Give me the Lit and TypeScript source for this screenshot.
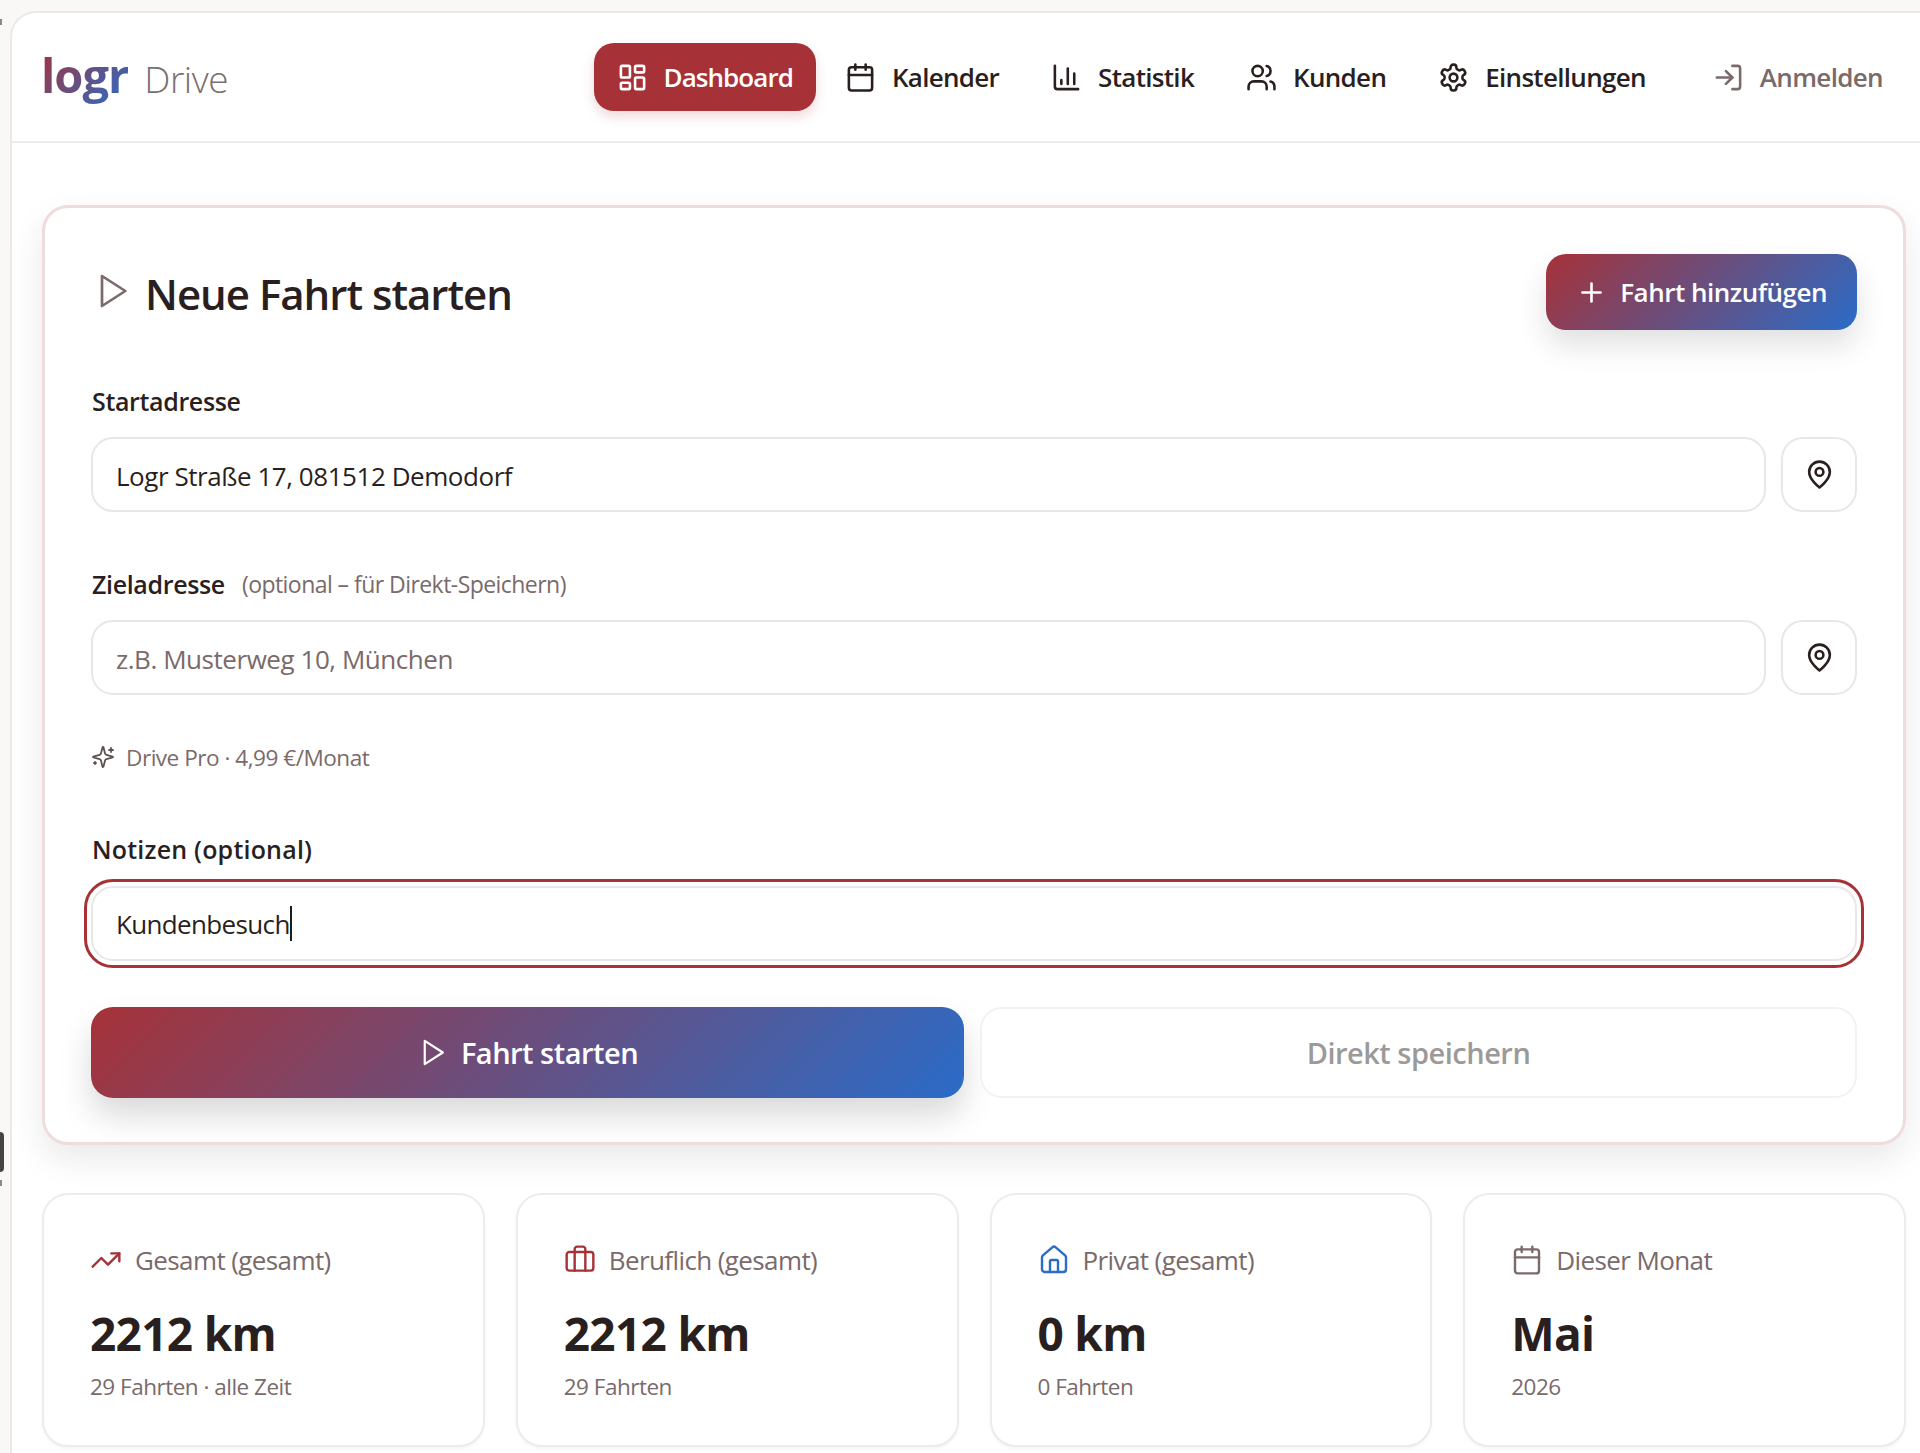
import { LitElement, css, html, svg, type TemplateResult } from "lit";
import { customElement } from "lit/decorators.js";

const ICONS: Record<string, TemplateResult> = {
  dashboard: svg`<rect x="3" y="3" width="7" height="9" rx="1"/><rect x="14" y="3" width="7" height="5" rx="1"/><rect x="14" y="12" width="7" height="9" rx="1"/><rect x="3" y="16" width="7" height="5" rx="1"/>`,
  calendar: svg`<path d="M8 2v4"/><path d="M16 2v4"/><rect x="3" y="4" width="18" height="18" rx="2"/><path d="M3 10h18"/>`,
  chart: svg`<path d="M3 3v16a2 2 0 0 0 2 2h16"/><path d="M18 17V9"/><path d="M13 17V5"/><path d="M8 17v-3"/>`,
  users: svg`<path d="M16 21v-2a4 4 0 0 0-4-4H6a4 4 0 0 0-4 4v2"/><circle cx="9" cy="7" r="4"/><path d="M22 21v-2a4 4 0 0 0-3-3.87"/><path d="M16 3.13a4 4 0 0 1 0 7.75"/>`,
  settings: svg`<path d="M12.22 2h-.44a2 2 0 0 0-2 2v.18a2 2 0 0 1-1 1.73l-.43.25a2 2 0 0 1-2 0l-.15-.08a2 2 0 0 0-2.73.73l-.22.38a2 2 0 0 0 .73 2.73l.15.1a2 2 0 0 1 1 1.72v.51a2 2 0 0 1-1 1.74l-.15.09a2 2 0 0 0-.73 2.73l.22.38a2 2 0 0 0 2.73.73l.15-.08a2 2 0 0 1 2 0l.43.25a2 2 0 0 1 1 1.73V20a2 2 0 0 0 2 2h.44a2 2 0 0 0 2-2v-.18a2 2 0 0 1 1-1.73l.43-.25a2 2 0 0 1 2 0l.15.08a2 2 0 0 0 2.73-.73l.22-.39a2 2 0 0 0-.73-2.73l-.15-.08a2 2 0 0 1-1-1.74v-.5a2 2 0 0 1 1-1.74l.15-.09a2 2 0 0 0 .73-2.73l-.22-.38a2 2 0 0 0-2.73-.73l-.15.08a2 2 0 0 1-2 0l-.43-.25a2 2 0 0 1-1-1.73V4a2 2 0 0 0-2-2z"/><circle cx="12" cy="12" r="3"/>`,
  login: svg`<path d="M15 3h4a2 2 0 0 1 2 2v14a2 2 0 0 1-2 2h-4"/><path d="m10 17 5-5-5-5"/><path d="M15 12H3"/>`,
  play: svg`<polygon points="6 3 20 12 6 21 6 3"/>`,
  plus: svg`<path d="M5 12h14"/><path d="M12 5v14"/>`,
  pin: svg`<path d="M20 10c0 6-8 12-8 12s-8-6-8-12a8 8 0 0 1 16 0Z"/><circle cx="12" cy="10" r="3"/>`,
  sparkles: svg`<path d="M9.937 15.5A2 2 0 0 0 8.5 14.063l-6.135-1.582a.5.5 0 0 1 0-.962L8.5 9.936A2 2 0 0 0 9.937 8.5l1.582-6.135a.5.5 0 0 1 .963 0L14.063 8.5A2 2 0 0 0 15.5 9.937l6.135 1.581a.5.5 0 0 1 0 .964L15.5 14.063a2 2 0 0 0-1.437 1.437l-1.582 6.135a.5.5 0 0 1-.963 0z"/><path d="M20 3v4"/><path d="M22 5h-4"/><path d="M4 17v2"/><path d="M5 18H3"/>`,
  trend: svg`<path d="m22 7-8.5 8.5-5-5L2 17"/><path d="M16 7h6v6"/>`,
  briefcase: svg`<path d="M16 20V4a2 2 0 0 0-2-2h-4a2 2 0 0 0-2 2v16"/><rect x="2" y="6" width="20" height="14" rx="2"/>`,
  home: svg`<path d="M15 21v-8a1 1 0 0 0-1-1h-4a1 1 0 0 0-1 1v8"/><path d="M3 10a2 2 0 0 1 .709-1.528l7-5.999a2 2 0 0 1 2.582 0l7 5.999A2 2 0 0 1 21 10v9a2 2 0 0 1-2 2H5a2 2 0 0 1-2-2z"/>`,
};

const icon = (name: string, cls = "") =>
  html`<svg class="icon ${cls}" viewBox="0 0 24 24" aria-hidden="true">${ICONS[name]}</svg>`;

const NAV = [
  { label: "Kalender", icon: "calendar" },
  { label: "Statistik", icon: "chart" },
  { label: "Kunden", icon: "users" },
  { label: "Einstellungen", icon: "settings" },
];

const STATS = [
  { label: "Gesamt (gesamt)", icon: "trend", tone: "red", value: "2212 km", sub: "29 Fahrten · alle Zeit" },
  { label: "Beruflich (gesamt)", icon: "briefcase", tone: "red", value: "2212 km", sub: "29 Fahrten" },
  { label: "Privat (gesamt)", icon: "home", tone: "blue", value: "0 km", sub: "0 Fahrten" },
  { label: "Dieser Monat", icon: "calendar", tone: "grey", value: "Mai", sub: "2026" },
];

@customElement("app-root")
export class AppRoot extends LitElement {
  static styles = css`
    :host {
      display: block;
      position: relative;
      height: 1453px;
      overflow: hidden;
      background: #faf8f6;
      color: #2a1f1f;
      font-family: "Open Sans", "Noto Sans", sans-serif;
    }

    * {
      box-sizing: border-box;
    }

    .icon {
      flex: none;
      width: 31px;
      height: 31px;
      fill: none;
      stroke: currentColor;
      stroke-width: 2;
      stroke-linecap: round;
      stroke-linejoin: round;
    }

    /* bits of the window behind, cut off by the left edge */
    .edge-tab {
      position: absolute;
      left: -4px;
      top: 1132px;
      width: 8px;
      height: 40px;
      border-radius: 4px;
      background: #444;
    }

    .edge-tick {
      position: absolute;
      left: 0;
      width: 2px;
      height: 6px;
      background: #8c8885;
    }

    .edge-tick.top {
      top: 19px;
    }

    .edge-tick.bottom {
      top: 1180px;
    }

    .window {
      margin: 11px 0 0 10px;
      height: 1442px;
      background: #fff;
      border-top: 2px solid #ebe9e7;
      border-left: 2px solid #ebe9e7;
      border-top-left-radius: 26px;
    }

    header {
      display: flex;
      align-items: center;
      height: 130px;
      padding: 0 14px 0 29px;
      border-bottom: 2px solid #ececec;
    }

    .logo {
      display: flex;
      align-items: baseline;
      gap: 16px;
      font-size: 47px;
      line-height: 60px;
    }

    .logo b {
      font-weight: 700;
      letter-spacing: -1px;
      background: linear-gradient(135deg, #a63238, #2a6cc8);
      -webkit-background-clip: text;
      background-clip: text;
      color: transparent;
    }

    .logo span {
      font-size: 37px;
      font-weight: 300;
      letter-spacing: -0.5px;
      color: #7a6f6f;
    }

    nav {
      display: flex;
      align-items: center;
      gap: 6px;
      margin-left: auto;
    }

    .nav-item {
      display: flex;
      align-items: center;
      gap: 16px;
      height: 68px;
      padding: 0 23px;
      border-radius: 20px;
      font-size: 26px;
      font-weight: 600;
      letter-spacing: -0.7px;
      white-space: nowrap;
    }

    .nav-item.active {
      background: #a63238;
      color: #fff;
      letter-spacing: -0.95px;
      box-shadow: 0 6px 12px rgb(166 50 56 / 0.18);
    }

    .nav-item.login {
      margin-left: 15px;
      letter-spacing: -0.65px;
      color: #7a6a6a;
    }

    main {
      padding: 62px 14px 0 30px;
    }

    .panel {
      padding: 46px 46px 44px 46px;
      background: #fff;
      border: 3px solid #efdcdc;
      border-radius: 26px;
      box-shadow: 0 14px 34px rgb(0 0 0 / 0.09);
    }

    .panel-head {
      display: flex;
      align-items: center;
      justify-content: space-between;
      height: 76px;
      margin-bottom: 57px;
    }

    h1 {
      display: flex;
      align-items: center;
      gap: 13px;
      margin: 2px 0 0;
      font-size: 42px;
      font-weight: 600;
      letter-spacing: -1px;
    }

    h1 .icon {
      width: 40px;
      height: 40px;
      margin: -4px 0 0 1px;
      stroke-width: 1.6;
      color: #7a6a6a;
    }

    .grad {
      background: linear-gradient(135deg, #a63238, #2a6cc8);
      color: #fff;
    }

    .add {
      display: flex;
      align-items: center;
      gap: 15.5px;
      height: 76px;
      padding: 0 30px 0 32px;
      border: 0;
      border-radius: 20px;
      font: inherit;
      font-size: 26px;
      font-weight: 600;
      letter-spacing: -0.5px;
      box-shadow: 0 16px 30px rgb(0 0 0 / 0.12);
    }

    .add .icon {
      margin: 0 -2px;
    }

    label {
      display: flex;
      align-items: center;
      height: 28px;
      margin-bottom: 22px;
      padding-left: 1px;
      font-size: 25px;
      font-weight: 600;
      letter-spacing: -0.35px;
    }

    label.notes {
      margin-bottom: 23px;
      letter-spacing: 0.2px;
    }

    label small {
      margin-left: 17px;
      font-size: 23px;
      font-weight: 400;
      letter-spacing: -0.55px;
      color: #7a6a6a;
    }

    .row {
      display: flex;
      gap: 15px;
      margin-bottom: 58px;
    }

    .row.dest {
      margin-bottom: 48px;
    }

    input,
    .note {
      display: flex;
      align-items: center;
      width: 100%;
      height: 75px;
      padding: 0 23px;
      background: #fff;
      border: 2px solid #e9e7e6;
      border-radius: 22px;
      color: #2a1f1f;
      font: inherit;
      font-size: 26px;
      letter-spacing: -0.45px;
      outline: none;
    }

    input {
      padding-top: 2px;
    }

    input::placeholder {
      color: #7a6a6a;
      opacity: 1;
    }

    .pin {
      display: flex;
      flex: none;
      align-items: center;
      justify-content: center;
      width: 76px;
      height: 75px;
      background: #fff;
      border: 2px solid #e9e7e6;
      border-radius: 22px;
    }

    .pro {
      display: flex;
      align-items: center;
      gap: 11px;
      height: 28px;
      margin-bottom: 64px;
      font-size: 22.6px;
      letter-spacing: -0.5px;
      color: #7a6a6a;
    }

    .pro .icon {
      width: 24px;
      height: 24px;
      color: #5d5050;
      stroke-width: 1.8;
    }

    .note {
      outline: 3.5px solid #a63238;
      outline-offset: 4px;
      margin-bottom: 46px;
      letter-spacing: -0.65px;
    }

    .caret {
      flex: none;
      width: 2px;
      height: 35px;
      background: #1c1c1c;
    }

    .actions {
      display: flex;
      gap: 16px;
    }

    .actions > * {
      display: flex;
      flex: 1;
      align-items: center;
      justify-content: center;
      gap: 13px;
      height: 91px;
      border-radius: 22px;
      font: inherit;
      font-size: 29px;
      font-weight: 600;
      letter-spacing: -0.5px;
    }

    .start {
      border: 0;
      box-shadow: 0 18px 32px rgb(0 0 0 / 0.15);
    }

    .start .icon {
      stroke-width: 1.7;
    }

    .save {
      background: #fff;
      border: 2px solid #f3f2f2;
      color: #9b9a99;
    }

    .stats {
      display: grid;
      grid-template-columns: repeat(4, 1fr);
      gap: 31px;
      margin-top: 48px;
    }

    .stat {
      padding: 46.5px 30px 44.5px 46px;
      background: #fff;
      border: 2px solid #ececec;
      border-radius: 26px;
      box-shadow: 0 2px 3px rgb(0 0 0 / 0.04);
    }

    .stat-label {
      display: flex;
      align-items: center;
      gap: 13px;
      height: 36px;
      font-size: 26px;
      font-weight: 500;
      letter-spacing: -0.6px;
      color: #7a6a6a;
    }

    .stat-label .icon {
      width: 32px;
      height: 32px;
      stroke-width: 1.8;
    }

    .stat-label .red {
      color: #a63238;
    }

    .stat-label .blue {
      color: #2a6cc8;
    }

    .stat-value {
      margin-top: 25px;
      font-size: 46px;
      font-weight: 700;
      line-height: 60px;
      letter-spacing: -0.7px;
    }

    .stat-sub {
      margin-top: 10px;
      font-size: 22.5px;
      line-height: 28px;
      letter-spacing: -0.5px;
      color: #7a6a6a;
    }
  `;

  render() {
    return html`
      <div class="edge-tab"></div>
      <div class="edge-tick top"></div>
      <div class="edge-tick bottom"></div>
      <div class="window">
        <header>
          <div class="logo"><b>logr</b><span>Drive</span></div>
          <nav>
            <div class="nav-item active">${icon("dashboard")}Dashboard</div>
            ${NAV.map((n) => html`<div class="nav-item">${icon(n.icon)}${n.label}</div>`)}
            <div class="nav-item login">${icon("login")}Anmelden</div>
          </nav>
        </header>
        <main>
          <section class="panel">
            <div class="panel-head">
              <h1>${icon("play")}Neue Fahrt starten</h1>
              <button class="add grad">${icon("plus")}Fahrt hinzufügen</button>
            </div>
            <label>Startadresse</label>
            <div class="row">
              <input value="Logr Straße 17, 081512 Demodorf" />
              <div class="pin">${icon("pin")}</div>
            </div>
            <label>Zieladresse<small>(optional – für Direkt-Speichern)</small></label>
            <div class="row dest">
              <input placeholder="z.B. Musterweg 10, München" />
              <div class="pin">${icon("pin")}</div>
            </div>
            <div class="pro">${icon("sparkles")}Drive Pro · 4,99 €/Monat</div>
            <label class="notes">Notizen (optional)</label>
            <div class="note">Kundenbesuch<span class="caret"></span></div>
            <div class="actions">
              <button class="start grad">${icon("play")}Fahrt starten</button>
              <button class="save">Direkt speichern</button>
            </div>
          </section>
          <section class="stats">
            ${STATS.map(
              (s) => html`<div class="stat">
                <div class="stat-label">${icon(s.icon, s.tone)}${s.label}</div>
                <div class="stat-value">${s.value}</div>
                <div class="stat-sub">${s.sub}</div>
              </div>`,
            )}
          </section>
        </main>
      </div>
    `;
  }
}
